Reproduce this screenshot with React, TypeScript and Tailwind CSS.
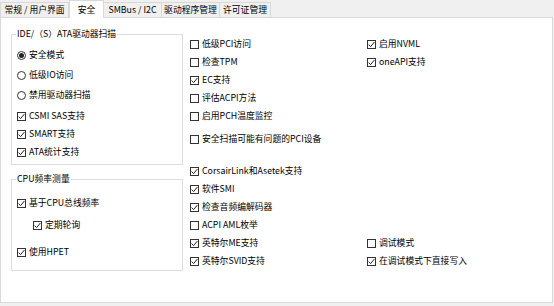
import React from "react";

function Box({ checked }: { checked?: boolean }) {
  return (
    <span className="w-[9px] h-[9px] border border-[#333333] bg-white flex items-center justify-center shrink-0">
      {checked && (
        <svg width="7" height="7" viewBox="0 0 7 7">
          <path d="M0.6 3.6 L2.6 5.6 L6.4 1" stroke="#222" fill="none" strokeWidth="1" />
        </svg>
      )}
    </span>
  );
}

function Radio({ checked }: { checked?: boolean }) {
  return (
    <span className="w-[9px] h-[9px] rounded-full border border-[#333333] bg-white flex items-center justify-center shrink-0">
      {checked && <span className="w-[5px] h-[5px] rounded-full bg-[#222]" />}
    </span>
  );
}

function Check({ label, checked, radio, cls = "" }: { label: string; checked?: boolean; radio?: boolean; cls?: string }) {
  return (
    <div className={"flex items-center gap-[3px] " + cls}>
      {radio ? <Radio checked={checked} /> : <Box checked={checked} />}
      <span className="whitespace-nowrap leading-[12px]">{label}</span>
    </div>
  );
}

const tabs = [
  { t: "常规 / 用户界面", w: "w-[69px]" },
  { t: "安全", w: "w-[35px]", sel: true },
  { t: "SMBus / I2C", w: "w-[59px]" },
  { t: "驱动程序管理", w: "w-[59px]" },
  { t: "许可证管理", w: "w-[52px]" },
];

export default function App() {
  return (
    <div className="w-[554px] h-[306px] bg-[#f0f0f0] text-black text-[8.8px] font-['Noto_Sans_CJK_SC',sans-serif] overflow-hidden">
      <div className="flex items-end h-[17px] relative z-10">
        {tabs.map((x) =>
          x.sel ? (
            <div
              key={x.t}
              className={x.w + " h-[18px] -mb-px bg-white border border-b-0 border-[#d9d9d9] flex items-center justify-center whitespace-nowrap"}
            >
              {x.t}
            </div>
          ) : (
            <div
              key={x.t}
              className={x.w + " h-[15px] bg-[#f0f0f0] border border-b-0 border-[#d9d9d9] -ml-px first:ml-0 flex items-center justify-center whitespace-nowrap"}
            >
              {x.t}
            </div>
          )
        )}
      </div>
      <div className="w-[553px] h-[286px] bg-white border border-[#d9d9d9] flex">
        <div className="ml-[10px] w-[172px] flex flex-col">
          <fieldset className="mt-[10px] border border-[#dcdcdc] pl-[5px] pt-[5px] pb-[3px]">
            <legend className="leading-[12px] px-[1px] -ml-[1px]">IDE/（S）ATA驱动器扫描</legend>
            <Check radio checked label="安全模式" cls="h-[20px]" />
            <Check radio label="低级IO访问" cls="h-[20px]" />
            <Check radio label="禁用驱动器扫描" cls="h-[20px]" />
            <Check checked label="CSMI SAS支持" cls="h-[18px] mt-[2px]" />
            <Check checked label="SMART支持" cls="h-[18px]" />
            <Check checked label="ATA统计支持" cls="h-[18px]" />
          </fieldset>
          <fieldset className="mt-[8px] border border-[#dcdcdc] pl-[5px] pt-[9px] pb-[9px]">
            <legend className="leading-[12px] px-[1px] -ml-[1px]">CPU频率测量</legend>
            <Check checked label="基于CPU总线频率" cls="h-[18px]" />
            <Check checked label="定期轮询" cls="h-[18px] mt-[4px] ml-[16px]" />
            <Check checked label="使用HPET" cls="h-[18px] mt-[9px]" />
          </fieldset>
        </div>
        <div className="ml-[7px] pt-[17px] flex flex-col">
          <div className="flex h-[18px]">
            <Check label="低级PCI访问" cls="w-[177px]" />
            <Check checked label="启用NVML" />
          </div>
          <div className="flex h-[18px]">
            <Check label="检查TPM" cls="w-[177px]" />
            <Check checked label="oneAPI支持" />
          </div>
          <Check checked label="EC支持" cls="h-[18px]" />
          <Check label="评估ACPI方法" cls="h-[18px]" />
          <Check label="启用PCH温度监控" cls="h-[18px]" />
          <Check label="安全扫描可能有问题的PCI设备" cls="h-[18px] mt-[5px]" />
          <Check checked label="CorsairLink和Asetek支持" cls="h-[18px] mt-[14px]" />
          <Check checked label="软件SMI" cls="h-[18px]" />
          <Check checked label="检查音频编解码器" cls="h-[18px]" />
          <Check label="ACPI AML枚举" cls="h-[18px]" />
          <div className="flex h-[18px]">
            <Check checked label="英特尔ME支持" cls="w-[177px]" />
            <Check label="调试模式" />
          </div>
          <div className="flex h-[18px]">
            <Check checked label="英特尔SVID支持" cls="w-[177px]" />
            <Check checked label="在调试模式下直接写入" />
          </div>
        </div>
      </div>
    </div>
  );
}
